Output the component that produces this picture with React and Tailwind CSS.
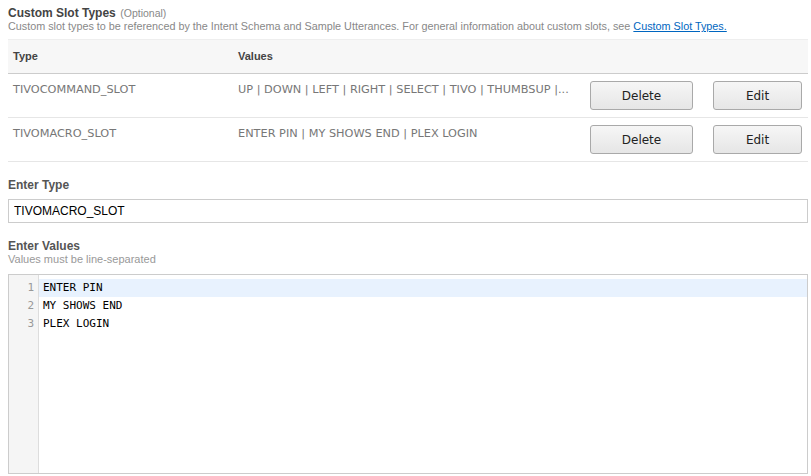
const rows = [
  {
    type: "TIVOCOMMAND_SLOT",
    values: "UP | DOWN | LEFT | RIGHT | SELECT | TIVO | THUMBSUP |...",
  },
  {
    type: "TIVOMACRO_SLOT",
    values: "ENTER PIN | MY SHOWS END | PLEX LOGIN",
  },
];

const lines = ["ENTER PIN", "MY SHOWS END", "PLEX LOGIN"];

const SlotButton = ({ children }) => (
  <button className="h-[29px] w-full rounded-[3px] border border-[#a9a9a9] bg-gradient-to-b from-[#f6f6f6] to-[#e6e6e6] font-['DejaVu_Sans',sans-serif] text-[12px] text-[#222]">
    {children}
  </button>
);

export default function App() {
  return (
    <div className="h-[476px] w-[811px] bg-white pl-2 pr-[3px] font-['Liberation_Sans',Arial,sans-serif]">
      {/* Title */}
      <div className="pt-[5px] leading-[14px]">
        <span className="text-[12px] font-bold text-[#444]">Custom Slot Types</span>{" "}
        <span className="text-[10.5px] text-[#888]">(Optional)</span>
      </div>
      <p className="text-[10.8px] leading-[13px] text-[#888]">
        Custom slot types to be referenced by the Intent Schema and Sample Utterances. For general
        information about custom slots, see{" "}
        <a className="text-[#0066c0] underline">Custom Slot Types.</a>
      </p>

      {/* Table */}
      <div className="mt-[6px]">
        <div className="grid h-[35px] grid-cols-[225px_352px_123px_100px] items-center border-t border-b border-t-[#eee] border-b-[#ccc] bg-[#f7f7f7] text-[11px] font-bold text-[#444]">
          <div className="pl-[5px]">Type</div>
          <div className="pl-[5px]">Values</div>
          <div />
          <div />
        </div>
        {rows.map((row) => (
          <div
            key={row.type}
            className="grid h-[44px] grid-cols-[225px_352px_123px_100px] border-b border-[#e6e6e6] font-['DejaVu_Sans',Verdana,sans-serif] text-[11.3px] text-[#777]"
          >
            <div className="pl-[5px] pt-[8px]">{row.type}</div>
            <div className="truncate pl-[5px] pt-[8px]">{row.values}</div>
            <div className="pl-[5px] pr-[15px] pt-[7px]">
              <SlotButton>Delete</SlotButton>
            </div>
            <div className="pl-[5px] pr-[6px] pt-[7px]">
              <SlotButton>Edit</SlotButton>
            </div>
          </div>
        ))}
      </div>

      {/* Enter Type */}
      <div className="mt-[16px] text-[12px] font-bold leading-[14px] text-[#555]">Enter Type</div>
      <input
        readOnly
        value="TIVOMACRO_SLOT"
        className="mt-[7px] h-[24px] w-full border border-[#ccc] px-[5px] text-[12px] text-black outline-none"
      />

      {/* Enter Values */}
      <div className="mt-[16px] text-[12px] font-bold leading-[14px] text-[#555]">Enter Values</div>
      <div className="text-[11px] leading-[13px] text-[#999]">Values must be line-separated</div>

      <div className="mt-[8px] flex h-[200px] border border-[#ccc] font-['DejaVu_Sans_Mono',monospace] text-[11px]">
        <div className="w-[30px] border-r border-[#ddd] bg-[#f5f5f5] pt-[4px] pr-[4px] text-right text-[#999]">
          {lines.map((l, i) => (
            <div key={l} className="h-[18px] leading-[18px]">
              {i + 1}
            </div>
          ))}
        </div>
        <div className="flex-1 pt-[4px]">
          {lines.map((l, i) => (
            <div
              key={l}
              className={`h-[18px] pl-[4px] leading-[18px] text-black ${i === 0 ? "bg-[#e8f2fe]" : ""}`}
            >
              {l}
            </div>
          ))}
        </div>
      </div>
    </div>
  );
}
